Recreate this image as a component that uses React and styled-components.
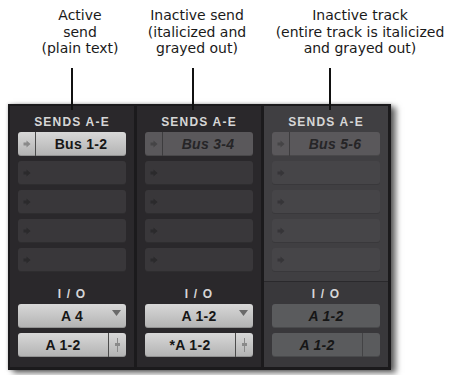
import React from "react";
import styled, { createGlobalStyle } from "styled-components";

const GlobalStyle = createGlobalStyle`
  body {
    margin: 0;
    background: #ffffff;
  }
`;

const Page = styled.div`
  position: relative;
  width: 460px;
  height: 375px;
  overflow: hidden;
  background: #ffffff;
  font-family: "Liberation Sans", Arial, sans-serif;
`;

const Notes = styled.div`
  display: flex;
  height: 104px;
  padding-top: 7px;
  box-sizing: border-box;
`;

const Note = styled.div`
  width: ${(p) => p.$w}px;
  margin-left: ${(p) => p.$ml}px;
  text-align: center;
  font-family: "DejaVu Sans", sans-serif;
  font-size: 14px;
  line-height: 16.5px;
  color: #1a1a1a;
  white-space: nowrap;
`;

const Leader = styled.div`
  position: absolute;
  left: ${(p) => p.$x}px;
  top: 68px;
  width: 2px;
  height: 42px;
  background: #111111;
  z-index: 2;
`;

const Mixer = styled.div`
  margin-left: 8px;
  width: 383px;
  height: 266px;
  display: flex;
  gap: 3px;
  padding: 2px 3px 3px 2px;
  box-sizing: border-box;
  background: #1b1a1c;
  box-shadow: 0 0 3px rgba(0, 0, 0, 0.25), 5px 3px 6px rgba(0, 0, 0, 0.6);
`;

const Strip = styled.div`
  width: 124px;
  display: flex;
  flex-direction: column;
  background: ${(p) => (p.$inactive ? "#39383b" : "#2a282b")};
`;

const SendsArea = styled.div`
  display: flex;
  flex-direction: column;
  padding: 0 8px 9px;
  background: ${(p) => (p.$inactive ? "#403f42" : "transparent")};
  border-bottom: 1px solid ${(p) => (p.$inactive ? "#2a292c" : "transparent")};
`;

const Title = styled.div`
  height: ${(p) => (p.$io ? 16 : 26)}px;
  padding-top: ${(p) => (p.$io ? 0 : 10)}px;
  margin: ${(p) => (p.$io ? "4px 0 2px" : "0")};
  box-sizing: border-box;
  text-align: center;
  font-size: 12px;
  line-height: ${(p) => (p.$io ? 16 : 12)}px;
  font-weight: bold;
  letter-spacing: 1.2px;
  color: #d6d6d6;
`;

const SlotList = styled.div`
  display: flex;
  flex-direction: column;
  gap: 5px;
`;

const tones = {
  light: { bg: "linear-gradient(#d8d8d8, #b2b2b2)", line: "#4c4c4c", icon: "#8a8a8a" },
  mid: { bg: "#5a585b", line: "#3d3c3e", icon: "#454446" },
  empty: { bg: "#39373a", line: "transparent", icon: "#2b2a2c" },
  ghost: { bg: "#464548", line: "transparent", icon: "#363538" },
  dim: { bg: "#5a5b5d", line: "#434345", icon: "#4c4d4f" },
};

const Slot = styled.div`
  height: 24px;
  display: flex;
  border-radius: 3px;
  overflow: hidden;
  background: ${(p) => tones[p.$tone].bg};
  box-shadow: inset 0 -1px 0 rgba(0, 0, 0, 0.18);
`;

const Tab = styled.div`
  width: 17px;
  flex: none;
  display: flex;
  align-items: center;
  justify-content: center;
  color: ${(p) => tones[p.$tone].icon};
  border-${(p) => (p.$right ? "left" : "right")}: 1px solid
    ${(p) => tones[p.$tone].line};
`;

const Label = styled.div`
  flex: 1;
  position: relative;
  display: flex;
  align-items: center;
  justify-content: center;
  font-size: 14px;
  font-weight: bold;
  letter-spacing: 0.3px;
  font-style: ${(p) => (p.$italic ? "italic" : "normal")};
  color: ${(p) => (p.$faded ? "#262527" : "#161616")};
`;

const IoArea = styled.div`
  display: flex;
  flex-direction: column;
  padding: 0 8px 10px;
`;

const Caret = styled.svg`
  position: absolute;
  right: 5px;
  top: 6px;
`;

const SendArrow = () => (
  <svg width="8" height="8" viewBox="0 0 8 8">
    <path d="M0.5 2.5h3V0.5l4 3.5-4 3.5V5.5h-3z" fill="currentColor" />
  </svg>
);

const Fader = () => (
  <svg width="7" height="14" viewBox="0 0 7 14">
    <rect x="3" y="0" width="1" height="14" fill="currentColor" />
    <rect x="1" y="5" width="5" height="3" fill="currentColor" />
  </svg>
);

const strips = [
  { inactive: false, sends: [{ tone: "light", text: "Bus 1-2" }], io: "A 4", caret: true, out: "A 1-2" },
  { inactive: false, sends: [{ tone: "mid", text: "Bus 3-4", italic: true }], io: "A 1-2", caret: true, out: "*A 1-2" },
  { inactive: true, sends: [{ tone: "mid", text: "Bus 5-6", italic: true }], io: "A 1-2", caret: false, out: "A 1-2" },
];

const ChannelStrip = ({ strip }) => {
  const emptyTone = strip.inactive ? "ghost" : "empty";
  const sends = [...strip.sends];
  while (sends.length < 5) sends.push({ tone: emptyTone, text: "" });
  const ioTone = strip.inactive ? "dim" : "light";

  return (
    <Strip $inactive={strip.inactive}>
      <SendsArea $inactive={strip.inactive}>
        <Title>SENDS A-E</Title>
        <SlotList>
          {sends.map((s, i) => (
            <Slot key={i} $tone={s.tone}>
              <Tab $tone={s.tone}>
                <SendArrow />
              </Tab>
              <Label $italic={s.italic} $faded={s.italic}>
                {s.text}
              </Label>
            </Slot>
          ))}
        </SlotList>
      </SendsArea>
      <IoArea>
        <Title $io>I / O</Title>
        <SlotList>
          <Slot $tone={ioTone}>
            <Label $italic={strip.inactive}>
              {strip.io}
              {strip.caret && (
                <Caret width="9" height="6" viewBox="0 0 9 6">
                  <path d="M0 0h9L4.5 6z" fill="#6a6a6a" />
                </Caret>
              )}
            </Label>
          </Slot>
          <Slot $tone={ioTone}>
            <Label $italic={strip.inactive}>{strip.out}</Label>
            <Tab $tone={ioTone} $right>
              {!strip.inactive && <Fader />}
            </Tab>
          </Slot>
        </SlotList>
      </IoArea>
    </Strip>
  );
};

export default function App() {
  return (
    <Page>
      <GlobalStyle />
      <Notes>
        <Note $w={100} $ml={30}>
          Active
          <br />
          send
          <br />
          (plain text)
        </Note>
        <Note $w={124} $ml={5}>
          Inactive send
          <br />
          (italicized and
          <br />
          grayed out)
        </Note>
        <Note $w={190} $ml={6}>
          Inactive track
          <br />
          (entire track is italicized
          <br />
          and grayed out)
        </Note>
      </Notes>
      <Leader $x={71} />
      <Leader $x={192} />
      <Leader $x={329} />
      <Mixer>
        {strips.map((s, i) => (
          <ChannelStrip key={i} strip={s} />
        ))}
      </Mixer>
    </Page>
  );
}
